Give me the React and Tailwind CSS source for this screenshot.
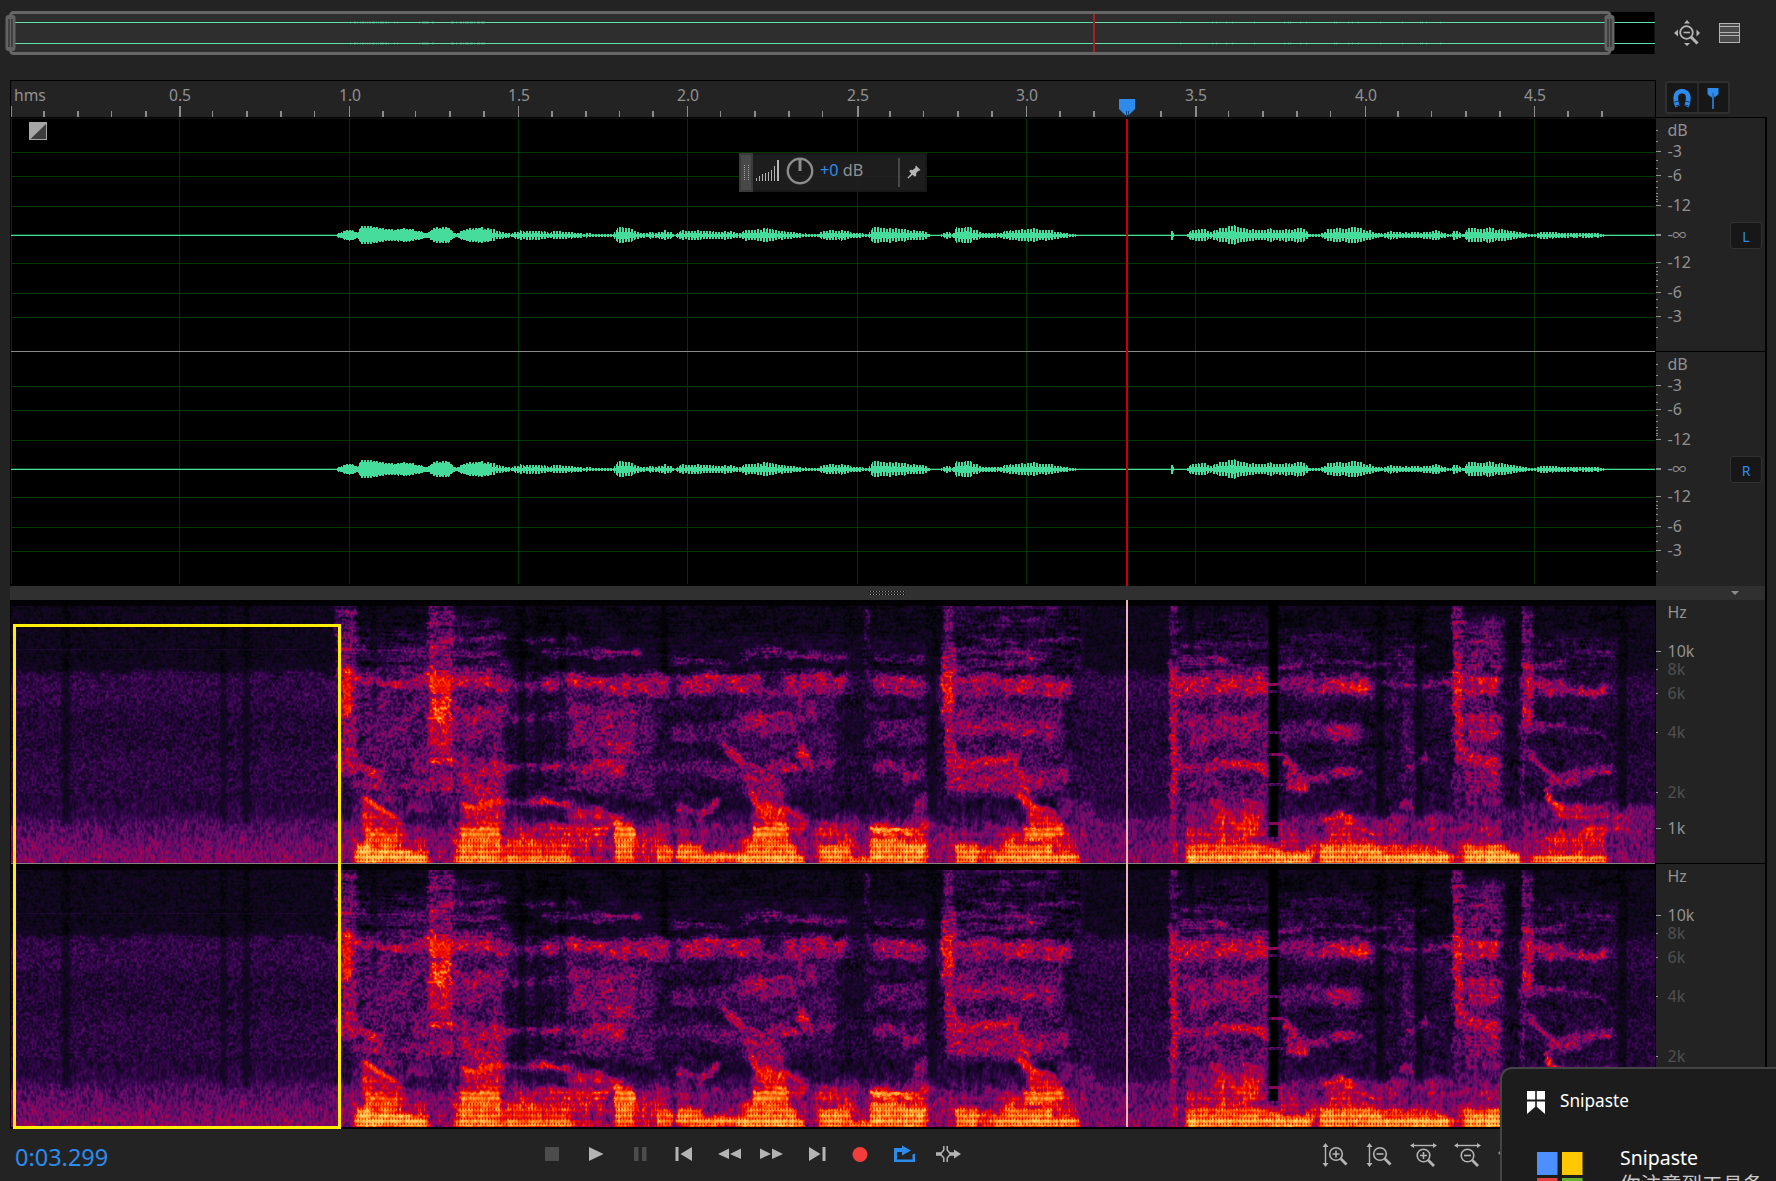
import React, { useLayoutEffect, useRef } from "react";

const SANS = "font-['Noto_Sans','Noto_Sans_CJK_SC',sans-serif]";

/* ---------- time axis ---------- */
const PX_PER_SEC = 338.6;
const timeX = (t) => Math.max(1, Math.floor(t * PX_PER_SEC + 0.6));

/* ---------- waveform ---------- */
const ENVELOPE = [
  [11, 0.5], [336, 0.5], [337, 2], [341, 3], [345, 5], [349, 6], [352, 5], [356, 3], [358, 4], [360, 9], [363, 10], [372, 9], [381, 8], [384, 6.5], [395, 6],
  [405, 7], [412, 6], [419, 4.5], [427, 2.5], [430, 5], [436, 8], [447, 8], [452, 4], [456, 1.5], [460, 4.5], [465, 6], [477, 8.5],
  [488, 7], [494, 6], [500, 4], [511, 1.5], [514, 3], [519, 5], [533, 4.5], [540, 5], [548, 3], [557, 4.5], [572, 3], [587, 2],
  [613, 1.5], [617, 9], [630, 7], [640, 2.5], [647, 2], [650, 4], [654, 2], [664, 5], [670, 4], [674, 1], [681, 5], [698, 5],
  [708, 4], [725, 5], [738, 2.5], [744, 5], [768, 7], [785, 4], [805, 2], [817, 1.2], [822, 4.5], [841, 5.5], [851, 3],
  [868, 1.6], [872, 8], [892, 8], [905, 6], [923, 4.5], [931, 1], [940, 1], [948, 4], [952, 2], [956, 7.5], [965, 9], [975, 5.5],
  [982, 2.5], [991, 3], [999, 2.5], [1008, 5], [1032, 6.5], [1047, 6], [1062, 3], [1076, 1.2], [1081, 0.5], [1170, 0.5],
  [1171, 5.5], [1173, 5], [1174, 1], [1186, 1], [1190, 5], [1197, 6.5], [1207, 5.5], [1211, 3], [1218, 7], [1232, 9.5], [1247, 7],
  [1257, 5], [1270, 6.5], [1277, 5], [1293, 7.5], [1303, 6.5], [1310, 1.5], [1320, 1.5], [1327, 6], [1340, 7.5], [1352, 8],
  [1363, 6.5], [1377, 3], [1382, 2], [1390, 4.5], [1400, 3], [1420, 3], [1437, 5], [1448, 1.5], [1451, 1], [1452, 5], [1458, 4.5],
  [1463, 1.5], [1467, 7], [1488, 8], [1497, 6], [1505, 7], [1512, 4.5], [1517, 3], [1522, 2.8], [1533, 1], [1540, 4], [1553, 3.5],
  [1567, 2.5], [1597, 2.5], [1603, 1.2], [1605, 0.5], [1655, 0.5],
];

const hash = (n) => {
  const s = Math.sin(n * 127.1) * 43758.5453;
  return s - Math.floor(s);
};

function envelopeAt(x) {
  for (let i = 1; i < ENVELOPE.length; i++) {
    if (x <= ENVELOPE[i][0]) {
      const [x0, a0] = ENVELOPE[i - 1];
      const [x1, a1] = ENVELOPE[i];
      return a0 + ((a1 - a0) * (x - x0)) / (x1 - x0 || 1);
    }
  }
  return 0.5;
}

function waveformPath(mid) {
  let d = "";
  for (let x = 11; x < 1655; x++) {
    let a = envelopeAt(x);
    if (a > 1) {
      const solid = x < 490 ? 0.82 : 0.45;
      const tooth = x % 3 === 0 ? solid : 1;
      const spread = x < 490 ? 0.2 : 0.3;
      a = a * tooth * (1.12 - spread + spread * hash(Math.floor(x / 3)));
    }
    const top = a < 1 ? 0.5 : a;
    const bottom = a < 1 ? 0.5 : a * 0.88;
    d += `M${x - 10} ${(mid - top).toFixed(1)}h1V${(mid + bottom).toFixed(1)}h-1z`;
  }
  return d;
}

const GRID_ROWS = [33, 57, 87, 144, 174, 198];

function Waveform() {
  return (
    <svg width="1646" height="467" viewBox="0 0 1646 467" className="block bg-black" shapeRendering="crispEdges">
      {[0, 234].map((off) =>
        GRID_ROWS.map((y) => <rect key={off + y} x="1" y={off + y} width="1644" height="1" fill="#023802" />)
      )}
      {Array.from({ length: 10 }, (_, i) => (
        <rect key={i} x={timeX(i / 2)} y="0" width="1" height="465" fill="#023302" />
      ))}
      <rect x="1" y="232" width="1644" height="1" fill="#8a8a8a" />
      {[0, 234].map((off) => (
        <g key={off}>
          <rect x="1" y={off + 115} width="1644" height="1" fill="#0c4a1c" />
          <path d={waveformPath(116.5 + off)} fill="#46dc9c" />
        </g>
      ))}
      <g shapeRendering="auto">
        <rect x="19" y="3" width="18" height="18" fill="#a6a6a6" />
        <path d="M36 5v15H20.500z" fill="#3c3c3c" />
      </g>
      <rect x="1116" y="0" width="2" height="467" fill="#c80000" />
    </svg>
  );
}

/* ---------- ruler ---------- */
function Ruler() {
  const ticks = Array.from({ length: 48 }, (_, i) => i);
  return (
    <svg width="1646" height="39" viewBox="0 0 1646 39" className="block">
      <rect width="1646" height="39" fill="#232323" />
      <rect width="1646" height="1" fill="#000" />
      <rect width="1" height="39" fill="#000" />
      <rect x="1645" width="1" height="39" fill="#000" />
      <rect y="37" width="1646" height="1" fill="#000" />
      <rect y="38" width="1646" height="1" fill="#111" />
      <g shapeRendering="crispEdges" fill="#8c8c8c">
        {ticks.map((i) => (
          <rect
            key={i}
            x={timeX(i / 10) - (i % 5 !== 0 ? 1 : 0)}
            y={i % 5 === 0 ? 26 : 31}
            width={i % 10 !== 0 && i % 3 !== 0 ? 2 : 1}
            height={i % 5 === 0 ? 11 : 6}
          />
        ))}
      </g>
      <g fill="#919191" fontSize="15.7">
        <text x="4" y="21">hms</text>
        {Array.from({ length: 9 }, (_, i) => (
          <text key={i} x={timeX((i + 1) / 2) + 1} y="21" textAnchor="middle">
            {((i + 1) / 2).toFixed(1)}
          </text>
        ))}
      </g>
      <path d="M1109 19h16v10l-6 6h-4l-6-6z" fill="#2d8ceb" />
      <path d="M1116.500 31v6M1118.500 31v6" stroke="#123a66" strokeWidth="0.8" />
    </svg>
  );
}

/* ---------- spectrogram ---------- */
const W = 1644;
const H = 263;
const RAMP = [
  [0, 0, 0, 0], [0.1, 11, 7, 21], [0.2, 28, 6, 48], [0.32, 56, 6, 80], [0.44, 98, 14, 106], [0.53, 138, 6, 100],
  [0.61, 178, 0, 68], [0.69, 218, 0, 18], [0.77, 246, 24, 0], [0.85, 255, 84, 0], [0.93, 255, 146, 40], [1.04, 255, 206, 90],
];

/* bands: x0, x1, centre y at x0, centre y at x1, half height, level */
const BANDS = [
  // ambient haze inside speech
  [340, 505, 90, 90, 24, 0.38], [355, 500, 150, 150, 60, 0.38], [500, 600, 150, 150, 55, 0.22], [560, 650, 135, 140, 55, 0.38],
  [350, 460, 45, 45, 14, 0.2], [452, 500, 45, 45, 28, 0.2], [600, 930, 52, 52, 14, 0.16], [955, 1080, 40, 40, 34, 0.18],
  [955, 1060, 140, 140, 55, 0.36], [740, 830, 140, 140, 50, 0.32], [1175, 1268, 150, 150, 80, 0.36], [1175, 1268, 45, 45, 30, 0.18],
  [1280, 1400, 48, 48, 18, 0.2], [1462, 1500, 130, 130, 110, 0.35], [1532, 1620, 60, 60, 22, 0.2], [340, 1080, 245, 245, 18, 0.52],
  [1185, 1500, 240, 240, 22, 0.52], [1500, 1650, 235, 235, 28, 0.46],
  // onset at 0.98s
  [337, 354, 25, 25, 22, 0.38], [340, 354, 60, 60, 22, 0.5], [344, 350, 92, 92, 22, 0.8], [343, 354, 130, 130, 45, 0.6],
  [340, 378, 162, 174, 6, 0.66], [372, 388, 176, 196, 5, 0.62], [365, 393, 200, 214, 4, 0.84], [355, 425, 185, 186, 3, 0.58],
  [355, 430, 82, 82, 4, 0.66], [355, 420, 50, 50, 3, 0.38], [360, 430, 58, 58, 3, 0.34], [365, 430, 125, 125, 13, 0.44],
  [363, 400, 218, 230, 13, 0.68], [367, 394, 238, 240, 8, 0.85], [390, 425, 242, 248, 8, 0.66], [358, 424, 257, 259, 5, 0.99],
  [358, 368, 252, 252, 8, 1], [365, 408, 252, 254, 5, 0.97],
  // sibilant at 1.25s
  [430, 450, 28, 28, 26, 0.42], [430, 450, 60, 60, 18, 0.56], [431, 450, 85, 85, 9, 0.81], [431, 448, 110, 110, 12, 0.79],
  [429, 449, 138, 138, 17, 0.64], [432, 452, 161, 161, 3, 0.76], [427, 450, 178, 178, 12, 0.57], [412, 430, 162, 170, 7, 0.52],
  // 1.35 - 1.7s
  [456, 498, 82, 82, 7, 0.64], [500, 545, 83, 83, 4, 0.5], [540, 610, 82, 82, 6, 0.63], [456, 498, 122, 122, 14, 0.54],
  [460, 498, 178, 178, 18, 0.6], [500, 600, 166, 168, 4, 0.62], [500, 565, 118, 118, 3, 0.46], [575, 632, 125, 125, 18, 0.52],
  [462, 498, 40, 40, 3, 0.42], [454, 498, 54, 54, 4, 0.44], [525, 575, 40, 40, 3, 0.36], [540, 600, 53, 53, 3, 0.38], [585, 637, 52, 54, 3, 0.46],
  [465, 499, 205, 204, 4, 0.83], [464, 498, 220, 220, 12, 0.68], [462, 497, 244, 244, 15, 0.9], [497, 516, 252, 252, 7, 0.8],
  [500, 530, 203, 203, 2, 0.58], [535, 567, 203, 204, 4, 0.76], [505, 600, 244, 234, 12, 0.66], [512, 565, 250, 250, 8, 0.8], [460, 572, 260, 260, 3, 0.96],
  [567, 620, 214, 224, 10, 0.6], [565, 605, 229, 229, 2, 0.8], [575, 612, 258, 261, 3, 0.66],
  [600, 665, 85, 85, 9, 0.6], [590, 628, 124, 128, 12, 0.53], [597, 623, 168, 168, 8, 0.62], [580, 628, 140, 148, 5, 0.54],
  // 1.8 - 2.4s
  [616, 631, 243, 243, 19, 0.9], [632, 660, 244, 250, 20, 0.66], [658, 670, 254, 254, 8, 0.91], [678, 700, 252, 254, 8, 0.91],
  [700, 748, 258, 256, 5, 0.93], [665, 700, 230, 236, 10, 0.46], [677, 700, 209, 216, 4, 0.56], [698, 716, 216, 204, 4, 0.6],
  [682, 758, 84, 84, 9, 0.63], [750, 776, 88, 93, 3, 0.6], [787, 844, 84, 84, 9, 0.58], [818, 843, 82, 82, 5, 0.66],
  [675, 722, 59, 62, 3, 0.42], [745, 780, 56, 50, 3, 0.46], [770, 795, 50, 54, 3, 0.46], [797, 845, 55, 57, 3, 0.44],
  [675, 740, 133, 130, 8, 0.4], [740, 765, 122, 122, 7, 0.58], [762, 790, 122, 122, 10, 0.55], [799, 813, 110, 110, 10, 0.52],
  [726, 753, 150, 168, 5, 0.62], [640, 720, 166, 166, 5, 0.4], [707, 745, 168, 176, 7, 0.49], [770, 798, 168, 165, 5, 0.62],
  [799, 810, 150, 162, 9, 0.62], [812, 834, 165, 165, 4, 0.48], [748, 780, 180, 190, 14, 0.57], [753, 768, 198, 212, 6, 0.78],
  [758, 783, 210, 218, 11, 0.73], [756, 783, 235, 233, 7, 0.91], [748, 792, 250, 252, 9, 0.89], [788, 804, 232, 240, 24, 0.6],
  [744, 800, 259, 259, 4, 0.99],
  // 2.4 - 2.7s
  [822, 846, 230, 232, 8, 0.66], [822, 847, 254, 254, 9, 0.93], [845, 870, 260, 260, 3, 0.9], [802, 822, 252, 252, 9, 0.56],
  [875, 924, 242, 242, 19, 0.73], [875, 905, 229, 229, 2, 0.95], [874, 922, 250, 254, 10, 0.93], [924, 946, 246, 250, 16, 0.58],
  [878, 923, 82, 84, 6, 0.63], [876, 920, 92, 92, 3, 0.54], [875, 923, 57, 59, 3, 0.38], [877, 923, 130, 130, 10, 0.42],
  [877, 905, 166, 168, 6, 0.5], [905, 925, 178, 168, 7, 0.52], [915, 925, 208, 200, 8, 0.54], [866, 867, 100, 100, 90, 0.32],
  // burst at 2.77s
  [945, 951, 28, 28, 24, 0.36], [944, 953, 62, 62, 14, 0.57], [943, 951, 94, 94, 20, 0.73], [946, 953, 135, 135, 22, 0.62], [948, 953, 172, 172, 16, 0.6],
  [955, 1066, 82, 85, 7, 0.63], [955, 1066, 91, 92, 3, 0.6], [960, 1040, 52, 52, 3, 0.4], [955, 1035, 66, 62, 4, 0.42], [1005, 1045, 64, 55, 3, 0.47],
  [980, 1075, 41, 41, 2, 0.36], [960, 1055, 7, 7, 2, 0.3], [960, 1052, 22, 22, 2, 0.28], [955, 1050, 122, 128, 9, 0.54],
  [957, 973, 160, 164, 7, 0.66], [970, 1018, 162, 158, 5, 0.65], [957, 1020, 178, 180, 11, 0.57], [1012, 1026, 162, 186, 6, 0.64],
  [1027, 1064, 176, 174, 8, 0.57], [1020, 1044, 198, 212, 5, 0.8], [1030, 1058, 214, 222, 8, 0.73], [1026, 1060, 233, 233, 6, 0.87],
  [1008, 1070, 246, 250, 12, 0.7], [957, 975, 254, 254, 9, 0.94], [976, 1002, 255, 255, 8, 0.76], [1000, 1074, 258, 258, 5, 0.95], [1008, 1048, 250, 252, 6, 0.89],
  [1060, 1090, 215, 220, 14, 0.42], [1065, 1200, 240, 245, 22, 0.43],
  // 3.43 - 3.75s
  [1172, 1175, 35, 35, 35, 0.36], [1172, 1175, 90, 90, 18, 0.58], [1172, 1176, 140, 140, 70, 0.62], [1172, 1175, 230, 230, 32, 0.56],
  [1179, 1266, 85, 85, 9, 0.6], [1180, 1266, 83, 84, 4, 0.67], [1180, 1228, 61, 61, 4, 0.48], [1230, 1264, 64, 66, 4, 0.4], [1175, 1262, 43, 43, 2, 0.36],
  [1190, 1206, 132, 132, 13, 0.52], [1214, 1264, 125, 125, 12, 0.55], [1177, 1266, 166, 168, 5, 0.6], [1217, 1263, 163, 170, 4, 0.66],
  [1192, 1263, 184, 184, 7, 0.42], [1188, 1266, 210, 208, 8, 0.57], [1216, 1260, 216, 214, 9, 0.66], [1220, 1254, 234, 228, 10, 0.78],
  [1190, 1216, 240, 240, 10, 0.64], [1255, 1295, 234, 242, 10, 0.58], [1190, 1308, 258, 258, 6, 0.97], [1190, 1275, 250, 250, 6, 0.87],
  [1280, 1320, 84, 84, 8, 0.57], [1324, 1366, 83, 86, 8, 0.66], [1278, 1480, 84, 84, 2, 0.54], [1280, 1330, 67, 62, 3, 0.46], [1325, 1385, 60, 66, 3, 0.42],
  [1285, 1296, 160, 170, 6, 0.63], [1288, 1304, 180, 182, 8, 0.63], [1300, 1355, 180, 170, 5, 0.5], [1335, 1353, 172, 170, 5, 0.62],
  [1285, 1358, 130, 134, 8, 0.42], [1330, 1350, 132, 132, 7, 0.56], [1326, 1350, 218, 219, 3, 0.78], [1348, 1374, 222, 234, 3, 0.78],
  [1332, 1374, 234, 242, 10, 0.66], [1370, 1405, 232, 240, 14, 0.52], [1322, 1376, 254, 255, 9, 0.94], [1378, 1446, 259, 259, 6, 0.97], [1378, 1434, 251, 253, 6, 0.8],
  [1308, 1322, 254, 254, 8, 0.7], [1400, 1413, 62, 62, 7, 0.42], [1405, 1423, 46, 48, 2, 0.42], [1408, 1424, 167, 158, 4, 0.6],
  [1402, 1410, 204, 204, 5, 0.58], [1404, 1413, 130, 130, 60, 0.33], [1395, 1410, 232, 232, 12, 0.48],
  // 4.27 - 4.7s
  [1454, 1460, 30, 30, 26, 0.5], [1454, 1460, 66, 66, 12, 0.6], [1454, 1461, 86, 86, 9, 0.75], [1454, 1460, 120, 120, 26, 0.65], [1454, 1458, 200, 200, 62, 0.46],
  [1464, 1496, 84, 85, 8, 0.65], [1464, 1496, 43, 43, 2, 0.46], [1464, 1496, 54, 54, 3, 0.52], [1464, 1496, 65, 65, 3, 0.44], [1468, 1495, 126, 126, 12, 0.58],
  [1459, 1495, 156, 164, 7, 0.68], [1468, 1494, 182, 182, 11, 0.57], [1470, 1493, 204, 204, 5, 0.42], [1467, 1498, 234, 236, 9, 0.6],
  [1467, 1500, 250, 251, 6, 0.9], [1467, 1516, 258, 258, 6, 1], [1500, 1538, 242, 246, 10, 0.52], [1447, 1466, 259, 259, 4, 0.7],
  [1523, 1530, 36, 36, 28, 0.36], [1524, 1531, 80, 80, 16, 0.63], [1523, 1531, 112, 112, 16, 0.63], [1521, 1523, 180, 180, 60, 0.38],
  [1523, 1560, 82, 83, 4, 0.65], [1545, 1603, 90, 90, 4, 0.65], [1535, 1562, 66, 60, 4, 0.44], [1580, 1605, 50, 50, 2, 0.34],
  [1525, 1560, 128, 126, 4, 0.52], [1555, 1600, 128, 134, 2, 0.42], [1530, 1560, 155, 182, 4, 0.6], [1552, 1608, 182, 168, 6, 0.55],
  [1547, 1562, 196, 208, 5, 0.76], [1557, 1598, 208, 216, 7, 0.63], [1565, 1628, 220, 222, 8, 0.54], [1547, 1603, 240, 232, 6, 0.72],
  [1540, 1602, 248, 248, 8, 0.67], [1537, 1602, 259, 259, 4, 0.95],
];

/* quiet slits: x0, x1, bottom, strength */
const SLITS = [
  [64, 67, 228, 0.45], [222, 224, 226, 0.35], [245, 247, 228, 0.42], [373, 374, 150, 0.3], [520, 523, 195, 0.45], [537, 539, 190, 0.3], [561, 563, 190, 0.4],
  [662, 665, 75, 0.6], [846, 866, 215, 0.15], [928, 934, 215, 0.35], [1189, 1191, 60, 0.5], [1270, 1276, 242, 1], [1378, 1381, 222, 0.5], [1417, 1420, 222, 0.45], [1620, 1624, 215, 0.55], [1502, 1518, 222, 0.2],
];
const SLIT_BRIDGES = [[83, 0.62], [90, 0.5], [131, 0.52], [153, 0.54], [183, 0.55], [222, 0.6], [237, 0.55], [245, 0.7]];

function colour(v) {
  if (v <= 0) return [0, 0, 0];
  for (let i = 1; i < RAMP.length; i++) {
    if (v <= RAMP[i][0]) {
      const a = RAMP[i - 1];
      const b = RAMP[i];
      const t = (v - a[0]) / (b[0] - a[0]);
      return [a[1] + (b[1] - a[1]) * t, a[2] + (b[2] - a[2]) * t, a[3] + (b[3] - a[3]) * t];
    }
  }
  return [255, 206, 90];
}

const FLOOR = [[0, 0.02], [5, 0.03], [6, 0.12], [50, 0.12], [68, 0.13], [73, 0.23], [80, 0.29], [100, 0.27], [115, 0.22], [145, 0.22], [158, 0.26], [185, 0.26], [202, 0.23], [214, 0.28], [222, 0.36], [240, 0.44], [263, 0.52]];
function floorAt(y) {
  for (let i = 1; i < FLOOR.length; i++) {
    if (y <= FLOOR[i][0]) {
      const [y0, a] = FLOOR[i - 1];
      const [y1, b] = FLOOR[i];
      return a + ((b - a) * (y - y0)) / (y1 - y0);
    }
  }
  return 0.52;
}

function mulberry(seed) {
  let a = seed;
  return () => {
    a = (a + 0x6d2b79f5) | 0;
    let t = Math.imul(a ^ (a >>> 15), 1 | a);
    t = (t + Math.imul(t ^ (t >>> 7), 61 | t)) ^ t;
    return ((t ^ (t >>> 14)) >>> 0) / 4294967296;
  };
}

function noiseField(seed, cw, ch) {
  const rnd = mulberry(seed);
  const gw = Math.ceil(W / cw) + 2;
  const gh = Math.ceil(H / ch) + 2;
  const g = new Float32Array(gw * gh).map(() => rnd() * 2 - 1);
  return (x, y) => {
    const fx = x / cw;
    const fy = y / ch;
    const ix = Math.floor(fx);
    const iy = Math.floor(fy);
    const tx = fx - ix;
    const ty = fy - iy;
    const p = iy * gw + ix;
    const top = g[p] + (g[p + 1] - g[p]) * tx;
    const bot = g[p + gw] + (g[p + gw + 1] - g[p + gw]) * tx;
    return top + (bot - top) * ty;
  };
}

const clamp = (n, lo, hi) => Math.min(hi, Math.max(lo, n));

function buildSpectrogram() {
  const f = new Float32Array(W * H);
  for (let y = 0; y < H; y++) {
    const base = floorAt(y);
    for (let x = 0; x < W; x++) {
      const ax = x + 11;
      const speech = (ax > 340 && ax < 1080) || (ax > 1175 && ax < 1620);
      f[y * W + x] = speech && y > 6 && y < 222 ? base * 0.9 : ax > 1630 && y > 70 ? base * 0.9 : base;
    }
  }
  for (const [x0, x1, ya, yb, h, level] of BANDS) {
    const s = x1 - x0 < 12 ? 2.2 : x1 - x0 < 24 ? 3 : 5;
    const reach = Math.ceil(s * 2.5);
    const pad = Math.min(13, h * 0.6 + 5);
    for (let ax = Math.max(11, x0 - reach); ax < Math.min(1655, x1 + reach); ax++) {
      const yc = ya + ((yb - ya) * (ax - x0)) / (x1 - x0);
      for (let y = Math.max(6, Math.floor(yc - h - pad)); y < Math.min(H, yc + h + pad); y++) {
        const ox = Math.max(0, Math.max(x0 - ax, ax - x1));
        const oy = Math.max(0, Math.abs(y - yc) - h + Math.min(h, 3));
        const k = Math.exp(-(ox * ox) / (s * s) - (oy * oy) / (pad * pad * 0.28));
        const i = y * W + ax - 11;
        if (level > f[i]) f[i] += (level - f[i]) * k;
      }
    }
  }

  // uneven energy: displace the smooth field with slow noise
  const warpX = noiseField(5, 11, 9);
  const warpY = noiseField(6, 14, 8);
  const jitter = noiseField(8, 2.5, 2.5);
  const g = new Float32Array(W * H);
  for (let y = 0; y < H; y++) {
    const fade = y < 12 ? 0 : y > 235 ? Math.max(0.15, (263 - y) / 32) : 1;
    for (let x = 0; x < W; x++) {
      const j = jitter(x, y) * 2;
      const sx = clamp(Math.round(x + (warpX(x, y) * 1.6 + j) * fade), 0, W - 1);
      const sy = clamp(Math.round(y + (warpY(x, y) * 4 + j) * fade), 0, H - 1);
      g[y * W + x] = f[sy * W + sx];
    }
  }

  for (const [x0, x1, bottom, strength] of SLITS) {
    for (let ax = x0 - 7; ax < x1 + 7; ax++) {
      const o = Math.max(0, Math.max(x0 - ax, ax - x1));
      const k = Math.exp(-(o * o) / (strength === 1 ? 4 : 9)) * strength;
      for (let y = 0; y < bottom; y++) g[y * W + ax - 11] *= 1 - k * Math.min(1, (bottom - y) / 8);
    }
  }
  for (const [y, level] of SLIT_BRIDGES) {
    for (let ax = 1269; ax < 1283; ax++) for (let d = 0; d < 3; d++) g[(y + d) * W + ax - 11] = level - 0.04;
  }

  const fine = noiseField(11, 1.6, 1.9);
  const mid = noiseField(23, 4, 4.5);
  const patch = noiseField(29, 11, 9);
  const wide = noiseField(37, 12, 1.6);
  const tall = noiseField(41, 1.4, 3.5);
  const column = noiseField(53, 3, 40);
  const out = new Uint8ClampedArray(W * H * 4);
  for (let y = 0; y < H; y++) {
    for (let x = 0; x < W; x++) {
      let v = g[y * W + x];
      const ax = x + 11;
      const speech = (ax > 337 && ax < 1080) || (ax > 1172 && ax < 1620);
      const low = y > 195;
      const amp = v < 0.05 ? 0.01 : v < 0.18 ? 0.07 : v < 0.35 ? 0.15 : v < 0.8 ? 0.2 : 0.11;
      if (speech && v > 0.4 && v < 0.84 && y < 240) v -= 0.035;
      let n = low ? fine(x, y) * 0.4 + tall(x, y) * 0.65 : fine(x, y);
      n += mid(x, y) * (speech ? 0.45 : 0.15);
      if (speech && y > 8) n += patch(x, y) * (v > 0.8 ? 0.3 : 0.36) - 0.06;
      if (speech && low) n += column(x, y) * 0.3;
      if (y < 75 && y > 5) n += wide(x, y) * (speech ? 0.65 : 0.4);
      v += n * amp;
      if (v > 0.6 && y > 215) {
        v += 0.045 * Math.cos(((262 - y) * Math.PI * 2) / 5.6);
        if (y > 238 && x % 3 === 0) v -= (y + 1) % 5 < 2 ? 0.14 : 0.03;
      }
      if (!speech && y === 49 && x < 310) v += 0.08;
      if (y > 261) v *= 0.9;
      const c = colour(v);
      const o = (y * W + x) * 4;
      out[o] = c[0];
      out[o + 1] = c[1];
      out[o + 2] = c[2];
      out[o + 3] = 255;
    }
  }
  return new ImageData(out, W, H);
}

let cached = null;
function Spectrogram() {
  const ref = useRef(null);
  useLayoutEffect(() => {
    if (!cached) cached = buildSpectrogram();
    ref.current.getContext("2d").putImageData(cached, 0, 0);
  }, []);
  return <canvas ref={ref} width={W} height={H} className="block ml-px h-[263px] w-[1644px]" />;
}

/* ---------- scales ---------- */
const DB_LABELS = [["dB", 130.8], ["-3", 151.5], ["-6", 175.5], ["-12", 205.5], ["-∞", 234.5], ["-12", 262.5], ["-6", 292.5], ["-3", 316.5]];
const DB_LONG = [151, 175, 205, 234, 262, 292, 316];
const DB_SHORT = [130, 141, 160, 168, 181, 187, 193, 196, 199, 201, 267, 271, 274, 280, 286, 299, 307, 327, 337];

function DbScale({ channel }) {
  return (
    <div className="flex h-[234px] w-[109px] items-start justify-between border-t border-black">
      <svg width="64" height="233" viewBox="0 118 64 233" fill="#919191" fontSize="16" className="block">
        <g shapeRendering="crispEdges">
          {DB_LONG.map((y) => <rect key={y} x="0" y={y} width="5" height={y === 234 ? 2 : 1} />)}
          {DB_SHORT.map((y) => <rect key={y} x="0" y={y} width="2" height="1" />)}
        </g>
        {DB_LABELS.map(([t, y]) => (
          <text key={y} x="11.500" y={y + 5.5}>
            {t[1] === "∞" ? <>-<tspan fontSize="14" dx="-0.5">∞</tspan></> : t}
          </text>
        ))}
      </svg>
      <div className="mr-[3px] mt-[104px] flex h-[27px] w-8 items-center justify-center rounded-[3px] border border-[#323232] bg-[#171717] pt-[3px] text-[14px] leading-none text-[#2d8ceb]">
        {channel}
      </div>
    </div>
  );
}

const HZ = [["Hz", 612, 0], ["10k", 651, 5], ["8k", 669, 2], ["6k", 693, 2], ["4k", 732, 2], ["2k", 792, 2], ["1k", 828, 5]];
function HzScale() {
  return (
    <svg width="109" height="263" viewBox="0 600 109 263" fontSize="16" className="block">
      {HZ.map(([t, y, len]) => (
        <g key={t}>
          <rect x="0" y={y} width={len} height="1" fill="#9a9a9a" />
          <text x="11.500" y={y + 6} fill={len === 2 ? "#505050" : "#919191"}>{t}</text>
        </g>
      ))}
    </svg>
  );
}

/* ---------- overview ---------- */
function Handle({ x }) {
  return (
    <g>
      <rect x={x} y="15" width="10" height="36" rx="3" fill="#636363" />
      <path d={`M${x + 3.500} 19v28M${x + 6.500} 19v28`} stroke="#2c2c2c" strokeWidth="1.200" />
    </g>
  );
}

function Overview() {
  const specks = [];
  for (let x = 349; x < 485; x++) if (x < 398 || (x > 418 && x < 434) || x > 450) if (hash(x) > 0.45) specks.push(x);
  for (let x = 1180; x < 1450; x += 2) if (hash(x) > 0.85) specks.push(x);
  return (
    <svg width="1656" height="80" viewBox="0 0 1656 80" className="block">
      <rect x="1600" y="12" width="54.500" height="42" fill="#000" />
      <rect x="10.500" y="12.500" width="1599.500" height="41" rx="3" fill="#2e2e2e" stroke="#666" strokeWidth="3" />
      <g shapeRendering="crispEdges">
        <rect x="14" y="22" width="1641" height="1" fill="#5fe0aa" />
        <rect x="14" y="43" width="1641" height="1" fill="#5fe0aa" />
        {specks.map((x) => (
          <g key={x} fill="#5fe0aa" opacity="0.22">
            <rect x={x} y="21" width="1" height="3" />
            <rect x={x} y="42" width="1" height="3" />
          </g>
        ))}
        <rect x="1093" y="14" width="2" height="38" fill="#a82020" />
      </g>
      <Handle x={5.5} />
      <Handle x={1604.5} />
    </svg>
  );
}

/* ---------- icons ---------- */
function ZoomFitIcon() {
  return (
    <svg width="26" height="26" viewBox="0 0 26 26" fill="none" stroke="#b4b4b4">
      <circle cx="12.500" cy="12.500" r="6.300" strokeWidth="1.800" />
      <path d="M9.500 12.500h6.500" strokeWidth="1.600" />
      <path d="M17 17l6.500 6.500" strokeWidth="3" />
      <path d="M13 0l3 3.500h-6zM13 26l3-3h-6zM0 13l4-3.500v7zM26 13l-3.500-3.500v7z" fill="#b4b4b4" stroke="none" />
    </svg>
  );
}
function RowsIcon() {
  return (
    <svg width="21" height="20" viewBox="0 0 21 20" shapeRendering="crispEdges">
      <rect x="0.500" y="0.500" width="20" height="19" fill="#4a4a4a" stroke="#b4b4b4" />
      <path d="M0 3.500h21M0 9.500h21M0 12.500h21" stroke="#b4b4b4" />
    </svg>
  );
}
function MagnetIcon() {
  return (
    <svg width="18" height="20" viewBox="0 0 18 20" fill="none">
      <path d="M4.500 18.600C3.200 15.800 2.700 13 2.700 9.800 2.700 5.800 5.500 3.200 9 3.200s6.300 2.600 6.300 6.600c0 3.200-.5 6-1.800 8.800" stroke="#2d8ceb" strokeWidth="4.800" />
      <path d="M1.200 14.200l4.600-1.200M2.600 18l4-1.200M16.800 14.200l-4.600-1.200M15.400 18l-4-1.200" stroke="#14375f" strokeWidth="1" />
    </svg>
  );
}
function MarkerIcon() {
  return (
    <svg width="12" height="22" viewBox="0 0 12 22">
      <path d="M0.500 1h11v6l-3.500 3.500h-4l-3.500-3.500z" fill="#2d8ceb" />
      <path d="M6 6v16" stroke="#2470bd" strokeWidth="2" />
      <path d="M4 9.500v1.500M8 9.500v1.500" stroke="#171717" />
    </svg>
  );
}

const TRANSPORT = [
  ["stop", 15, "ml-[545px]", <rect x="0" y="2" width="14" height="14" fill="#4c4c4c" />],
  ["play", 15, "ml-[29px]", <path d="M0 2l14.500 7L0 16z" fill="#b4b4b4" />],
  ["pause", 13, "ml-[30px]", <path d="M0 2h4.500v14H0zM8 2h4.500v14H8z" fill="#4c4c4c" />],
  ["previous", 17, "ml-[28px]", <path d="M0.500 2h3v14h-3zM17 2v14L5.500 9z" fill="#b4b4b4" />],
  ["rewind", 23, "ml-[26px]", <path d="M11 3.500v10.500L0 9zM23 3.500v10.500L12 9z" fill="#b4b4b4" />],
  ["forward", 23, "ml-[19px]", <path d="M0 3.500v10.500L11 9zM12 3.500v10.500L23 9z" fill="#b4b4b4" />],
  ["next", 17, "ml-[26px]", <path d="M13.500 2h3v14h-3zM0 2v14L11.500 9z" fill="#b4b4b4" />],
  ["record", 16, "ml-[26px]", <circle cx="8" cy="9.500" r="7.500" fill="#f53c3c" />],
  ["loop", 22, "ml-[26px]", <path d="M0 3h8V0.500l9 5-9 5V7H3v7.500h15.500V9.500l2.500-1V17H0z" fill="#2d8ceb" />],
  ["skip", 25, "ml-[20px]", (
    <g fill="none" stroke="#b4b4b4" strokeWidth="1.500">
      <path d="M7.800 1v4L4.500 9l3.300 4v4M11.200 1v4l3.300 4-3.300 4v4" />
      <path d="M5 7.200v3.600H0V7.200zM14 7.200h4V4.500L25 9l-7 4.500v-2.700h-4z" fill="#b4b4b4" stroke="none" />
    </g>
  )],
];

function AxisZoomIcon({ vertical, plus }) {
  return (
    <svg width="27" height="24" viewBox="0 0 27 24" fill="none" stroke="#b4b4b4" strokeWidth="1.400">
      {vertical ? (
        <g>
          <path d="M3.500 3v18" />
          <path d="M3.500 0l3 4h-6zM3.500 24l3-4h-6z" fill="#b4b4b4" stroke="none" />
        </g>
      ) : (
        <g>
          <path d="M3 2.500h20" />
          <path d="M0 2.500l4-2.500v5zM27 2.500l-4-2.500v5z" fill="#b4b4b4" stroke="none" />
        </g>
      )}
      <g transform={vertical ? "translate(14 11)" : "translate(13.500 12.500)"}>
        <circle r="6.300" strokeWidth="1.600" />
        <path d={plus ? "M-3.500 0h7M0-3.500v7" : "M-3.500 0h7"} strokeWidth="1.600" />
        <path d="M4.800 4.800l5.700 5.700" strokeWidth="2.800" />
      </g>
    </svg>
  );
}

function GainHud() {
  return (
    <div className="absolute left-[729px] top-[34px] flex h-[39px] w-[188px] items-center border-2 border-[#181818]/90 bg-[#202020]/90">
      <div className="-my-[2px] -ml-[2px] flex h-[39px] w-[14px] items-center justify-center border-2 border-[#3a3a3a] bg-[#484848]">
        <svg width="5" height="16" viewBox="0 0 5 16" shapeRendering="crispEdges">
          <path d="M0.500 0v16M4.500 0v16" stroke="#a0a0a0" strokeDasharray="1 1" />
        </svg>
      </div>
      <svg width="24" height="22" viewBox="0 0 24 22" className="-mt-[5px] ml-[3px]" shapeRendering="crispEdges">
        {[3, 5, 7, 8, 9, 11, 15, 21].map((h, i) => (
          <rect key={i} x={i * 3} y={22 - h} width={i === 7 ? 2 : 1} height={h} fill="#b4b4b4" />
        ))}
      </svg>
      <svg width="28" height="28" viewBox="0 0 28 28" className="-mt-[3px] ml-[6px]">
        <circle cx="14" cy="14" r="12.200" fill="none" stroke="#8c8c8c" strokeWidth="2.400" />
        <path d="M14 2v12" stroke="#8c8c8c" strokeWidth="3" />
      </svg>
      <span className="-mt-[4px] ml-[6px] w-[79px] whitespace-pre text-[16.2px] leading-none text-[#919191]">
        <span className="text-[#2d8ceb]">+0</span> dB
      </span>
      <div className="-ml-px h-[29px] w-[2px] bg-[#484848]" />
      <svg width="14" height="14" viewBox="0 0 14 14" className="-mt-px ml-[7px]">
        <path d="M9 .5l4.500 4.500-1.300.8-.8-.1-2.300 2.600.2 2.200-1.400 1.300L5.500 9.800 1.300 13.600.4 12.700 4.200 8.500 2.200 6.300l1.300-1.500 2.300.1 2.600-2.200-.1-.9z" fill="#b4b4b4" />
      </svg>
    </div>
  );
}

function Toast() {
  return (
    <div className="absolute left-[1500px] top-[1067px] h-[114px] w-[276px] overflow-hidden rounded-tl-[12px] border-l-2 border-t-2 border-[#444] bg-[#1c1c1c] text-white">
      <div className="ml-[25px] mt-[21px] flex h-[24px] items-center">
        <svg width="18" height="23" viewBox="0 0 18 23" fill="#fff">
          <path d="M0 0h8.200v8.500H0zM9.800 0H18v8.500H9.800zM0 10.500h8.200v5.200L0 23zM9.800 10.500H18V23l-8.200-7.300z" />
        </svg>
        <span className="-mt-[2px] ml-[15px] text-[17.2px] leading-none">Snipaste</span>
      </div>
      <div className="ml-[35px] mt-[29px] flex items-start">
        <svg width="46" height="46" viewBox="0 0 46 46" className="mt-[9px]">
          <rect width="20.500" height="23" fill="#4c90ff" />
          <rect x="25" width="20.500" height="23" fill="#ffc800" />
          <rect y="26" width="20.500" height="20" fill="#e04040" />
          <rect x="25" y="26" width="20.500" height="20" fill="#68b030" />
        </svg>
        <div className="ml-[37px] w-[156px] whitespace-nowrap">
          <div className="pt-[2px] text-[19.5px] leading-[26px]">Snipaste</div>
          <div className="text-[20.500px] leading-[26px] text-[#c8c8c8]">你注意到工具条</div>
        </div>
      </div>
    </div>
  );
}

export default function App() {
  return (
    <div className={`relative flex h-[1181px] w-[1776px] flex-col overflow-hidden bg-[#232323] ${SANS}`}>
      <header className="flex h-[80px]">
        <Overview />
        <div className="mt-[20px] flex h-[26px] items-center gap-[19px] pl-[18px]">
          <ZoomFitIcon />
          <RowsIcon />
        </div>
      </header>

      <main className="ml-[10px] flex h-[1049px]">
        <section className="relative w-[1646px] bg-black">
          <Ruler />
          <div className="relative">
            <Waveform />
            <GainHud />
          </div>
          <div className="flex h-[14px] items-center bg-[#303030] pl-[859px]">
            <svg width="36" height="4" viewBox="0 0 36 4" shapeRendering="crispEdges">
              <path d="M0 .5h36M1 3.500h36" stroke="#0c0c0c" />
              <path d="M1 .5h36M1 3.500h36" stroke="#999" strokeDasharray="1 2" />
            </svg>
          </div>
          <div className="relative">
            <Spectrogram />
            <div className="ml-px h-px w-[1644px] bg-[#8a8084]" />
            <Spectrogram />
            <div className="absolute left-[1116px] top-0 h-[527px] w-[2px] bg-[#f0b4b8]" />
            <div className="absolute left-[3px] top-[24px] h-[505px] w-[328px] border-[3px] border-[#fff000]" />
          </div>
        </section>

        <aside className="w-[111px]">
          <div className="flex h-[37px] items-start pl-[9px] pt-px">
            <div className="flex h-[33px] w-[65px] rounded-[3px] border-2 border-[#2f2f2f] bg-[#171717]">
              <div className="flex flex-1 items-center justify-center border-r-2 border-[#2a2a2a]">
                <MagnetIcon />
              </div>
              <div className="flex flex-1 items-center justify-center">
                <MarkerIcon />
              </div>
            </div>
          </div>
          <div className="h-[1012px] border-r-2 border-black">
            <DbScale channel="L" />
            <DbScale channel="R" />
            <div className="flex h-[15px] items-end">
              <div className="flex h-[14px] w-[109px] items-center justify-end bg-[#303030] pr-[26px]">
                <svg width="8" height="4" viewBox="0 0 8 4">
                  <path d="M0 0h8L4 4z" fill="#8c8c8c" />
                </svg>
              </div>
            </div>
            <HzScale />
            <div className="h-px bg-black" />
            <HzScale />
          </div>
        </aside>
      </main>

      <footer className="flex h-[52px] items-start">
        <div className="flex w-0 whitespace-nowrap pl-[15px] pt-[16px] text-[23.5px] leading-[24px] text-[#2d8ceb]">
          <span>0:03.299</span>
        </div>
        <div className="-ml-[15px] flex pt-[16px]">
          {TRANSPORT.map(([name, w, gap, glyph]) => (
            <svg key={name} width={w} height="18" viewBox={`0 0 ${w} 18`} className={`shrink-0 ${gap}`} aria-label={name}>
              {glyph}
            </svg>
          ))}
        </div>
        <div className="ml-[361px] flex shrink-0 pt-[14px]">
          <AxisZoomIcon vertical plus />
          <div className="ml-[17px] flex"><AxisZoomIcon vertical /></div>
          <div className="ml-[17px] flex"><AxisZoomIcon plus /></div>
          <div className="ml-[17px] flex"><AxisZoomIcon /></div>
          <svg width="6" height="8" viewBox="0 0 6 8" className="ml-[17px] mt-[6px]">
            <path d="M0 4l4-4h2v8H4z" fill="#8c8c8c" />
          </svg>
        </div>
      </footer>

      <Toast />
    </div>
  );
}
